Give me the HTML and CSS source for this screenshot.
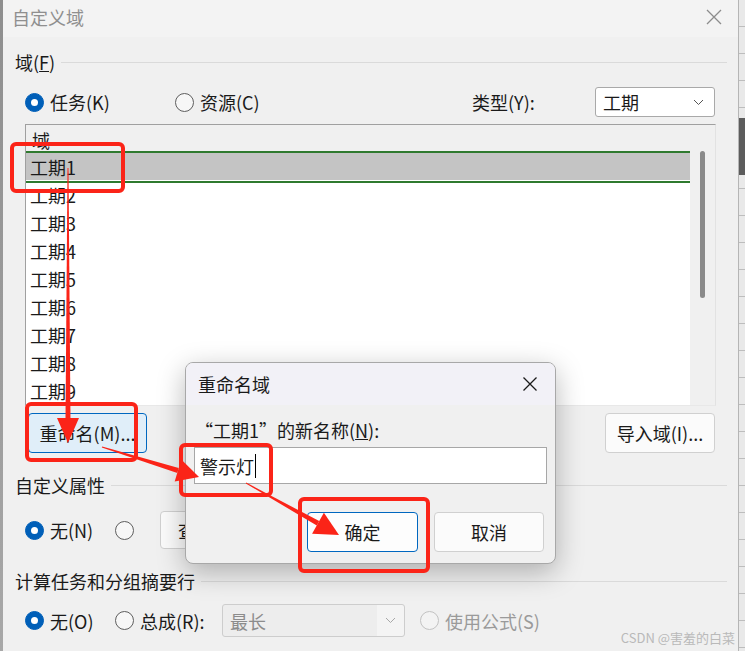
FILE: index.html
```html
<!DOCTYPE html>
<html lang="zh-CN">
<head>
  <meta charset="UTF-8">
  <title>自定义域</title>
  <link rel="stylesheet" href="styles.css">
</head>
<body>
  <div class="screen">
    <div class="edge-left"></div>

    <!-- Main dialog: 自定义域 -->
    <div class="window">
      <div class="titlebar">
        <span class="title">自定义域</span>
        <svg class="win-close" width="16" height="16" viewBox="0 0 16 16"><path d="M1 1L15 15M15 1L1 15" stroke="#8c8c8c" stroke-width="1.3" fill="none"/></svg>
      </div>

      <div class="content">
        <div class="group-head"><span>域(<u>F</u>)</span><i class="rule"></i></div>

        <div class="row type-row">
          <label class="radio-item wide"><span class="radio checked"></span>任务(K)</label>
          <label class="radio-item"><span class="radio"></span>资源(C)</label>
          <span class="type-label">类型(Y):</span>
          <div class="select type-select">
            <span>工期</span>
            <svg width="11" height="7" viewBox="0 0 11 7"><path d="M1 1L5.5 5.5L10 1" stroke="#555" stroke-width="1" fill="none"/></svg>
          </div>
        </div>

        <div class="listbox">
          <div class="list">
            <div class="list-head">域</div>
            <div class="list-row selected">工期1</div>
            <div class="list-row">工期2</div>
            <div class="list-row">工期3</div>
            <div class="list-row">工期4</div>
            <div class="list-row">工期5</div>
            <div class="list-row">工期6</div>
            <div class="list-row">工期7</div>
            <div class="list-row">工期8</div>
            <div class="list-row">工期9</div>
          </div>
          <div class="scrollbar"><div class="thumb"></div></div>
        </div>

        <div class="btn-row">
          <button class="btn focused rename-btn">重命名(M)...</button>
          <button class="btn import-btn">导入域(I)...</button>
        </div>

        <div class="group-head gap"><span>自定义属性</span><i class="rule"></i></div>

        <div class="row attr-row">
          <label class="radio-item"><span class="radio checked"></span>无(N)</label>
          <label class="radio-item short"><span class="radio"></span></label>
          <button class="btn lookup-btn">查阅(L)...</button>
        </div>

        <div class="group-head gap"><span>计算任务和分组摘要行</span><i class="rule"></i></div>

        <div class="row calc-row">
          <label class="radio-item"><span class="radio checked"></span>无(O)</label>
          <label class="radio-item rollup"><span class="radio"></span>总成(R):</label>
          <div class="select rollup-select">
            <span>最长</span>
            <svg width="11" height="7" viewBox="0 0 11 7"><path d="M1 1L5.5 5.5L10 1" stroke="#a8a8a8" stroke-width="1" fill="none"/></svg>
          </div>
          <label class="radio-item disabled"><span class="radio"></span>使用公式(S)</label>
        </div>
      </div>
    </div>

    <div class="edge-right"></div>

    <!-- Popup: 重命名域 -->
    <div class="dialog">
      <div class="dialog-title">
        <span>重命名域</span>
        <svg width="16" height="16" viewBox="0 0 16 16"><path d="M1.5 1.5L14.5 14.5M14.5 1.5L1.5 14.5" stroke="#1a1a1a" stroke-width="1.3" fill="none"/></svg>
      </div>
      <div class="dialog-body">
        <div class="field-label">“工期1”的新名称(<u>N</u>):</div>
        <div class="text-input"><span class="caret">警示灯</span></div>
        <div class="dialog-buttons">
          <button class="btn focused plain">确定</button>
          <button class="btn">取消</button>
        </div>
      </div>
    </div>

    <!-- red annotations -->
    <svg class="marks" width="745" height="651" viewBox="0 0 745 651">
      <g fill="none" stroke="#fb2418" stroke-width="4">
        <rect x="12" y="144" width="111" height="47" rx="4"/>
        <rect x="27" y="404" width="109" height="56" rx="4"/>
        <rect x="181" y="445" width="90" height="50" rx="4"/>
        <rect x="300" y="499" width="128" height="72" rx="4"/>
      </g>
      <g fill="#fb2418">
        <polygon points="67.5,168 68.5,168 70.5,420 65.5,420"/>
        <polygon points="57,418 79,418 68,443"/>
        <polygon points="101.8,447.5 102.2,446.5 178.7,468.1 177.3,472.9"/>
        <polygon points="174.7,481.5 181.3,459.5 199,477"/>
        <polygon points="245.8,483.4 246.2,482.6 319.2,521.1 316.8,525.5"/>
        <polygon points="312.1,533.8 323.9,512.8 339,535"/>
      </g>
    </svg>

    <div class="watermark">CSDN @害羞的白菜</div>
  </div>
</body>
</html>
```

FILE: styles.css
```css
/* Page */
body {
  margin: 0;
  font-family: "Noto Sans CJK SC", "Microsoft YaHei", sans-serif;
  font-size: 18px;
  color: #1a1a1a;
}

.screen {
  position: relative;
  width: 745px;
  height: 651px;
  display: flex;
  overflow: hidden;
  background: #f0f0f0;
}

.edge-left {
  width: 3px;
  background: linear-gradient(#8e8e8e, #a8a8a8);
}

.edge-right {
  width: 6px;
  border-left: 1px solid #b5b5b5;
  background:
    linear-gradient(#5c5c5c, #5c5c5c) 0 118px / 100% 57px no-repeat,
    repeating-linear-gradient(#e9e9e9 0 26px, #bdbdbd 26px 27px);
}

/* Main window */
.window {
  width: 735px;
  display: flex;
  flex-direction: column;
}

.titlebar {
  height: 37px;
  box-sizing: border-box;
  padding: 0 16px 4px 9px;
  display: flex;
  align-items: center;
  justify-content: space-between;
  background: #f3f3f3;
}
.title {
  color: #8f8f8f;
  line-height: 24px;
}

.content {
  flex: 1;
  padding: 13px 22px 0 12px;
  background: #f0f0f0;
}

.group-head {
  display: flex;
  align-items: center;
  height: 24px;
  line-height: 24px;
}
.group-head.gap {
  margin-top: 20px;
}
.rule {
  flex: 1;
  height: 1px;
  background: #dadada;
  margin: 0 -11px 0 6px;
}

.row {
  display: flex;
  align-items: center;
  margin-left: 10px;
}

/* Radios */
.radio-item {
  display: flex;
  align-items: center;
  width: 90px;
  line-height: 24px;
}
.radio-item.wide { width: 150px; }
.radio-item.short { width: 45px; }
.radio-item.rollup { width: 107px; }
.radio-item.disabled {
  width: auto;
  margin-left: 15px;
  color: #9a9a9a;
}

.radio {
  width: 19px;
  height: 19px;
  box-sizing: border-box;
  border-radius: 50%;
  border: 1px solid #5e5e5e;
  background: #f7f7f7;
  margin-right: 6px;
  flex: none;
  display: flex;
  align-items: center;
  justify-content: center;
}
.radio.checked {
  background: #005fb8;
  border-color: #005fb8;
}
.radio.checked::after {
  content: "";
  width: 7px;
  height: 7px;
  border-radius: 50%;
  background: #fff;
}
.disabled .radio {
  border-color: #c2c2c2;
  background: #f3f3f3;
}

/* Type row */
.type-row {
  margin-top: 13px;
  height: 30px;
}
.type-label {
  margin-left: auto;
  width: 123px;
}

.select {
  box-sizing: border-box;
  display: flex;
  align-items: center;
  justify-content: space-between;
  border-radius: 3px;
}
.type-select {
  width: 120px;
  height: 30px;
  padding: 0 10px 0 7px;
  margin-right: 1px;
  background: #fff;
  border: 1px solid #a9a9a9;
}

/* List box */
.listbox {
  margin: 7px 0 0 10px;
  height: 282px;
  box-sizing: border-box;
  display: flex;
  border: 1px solid;
  border-color: #a0a0a0 #e2e2e2 #e8e8e8 #a0a0a0;
  background: #fff;
}
.list {
  flex: 1;
  overflow: hidden;
}
.list-head {
  height: 28px;
  line-height: 30px;
  padding-left: 6px;
  background: #f0f0f0;
}
.list-row {
  height: 28px;
  line-height: 28px;
  padding-left: 4px;
}
.list-row.selected {
  position: relative;
  z-index: 1;
  background: #c4c4c4;
  box-shadow: inset 0 -1px 0 #fff, 0 -2px 0 #2f7a2f, 0 2px 0 #2f7a2f;
}
.scrollbar {
  width: 25px;
  background: #f0f0f0;
  padding: 26px 0 0 10px;
  box-sizing: border-box;
}
.thumb {
  width: 5px;
  height: 147px;
  border-radius: 3px;
  background: #8a8a8a;
}

/* Buttons */
.btn {
  font-family: inherit;
  font-size: 18px;
  color: #1a1a1a;
  height: 40px;
  box-sizing: border-box;
  padding: 0;
  border: 1px solid #d0d0d0;
  border-radius: 4px;
  background: #fbfbfb;
  width: 110px;
}
.btn.focused {
  border-color: #0067c0;
  background: #e0eef9;
}
.btn.focused.plain {
  background: #fdfdfd;
  width: 111px;
}

.btn-row {
  display: flex;
  justify-content: space-between;
  margin: 7px 1px 0 13px;
}
.rename-btn { width: 119px; }

.attr-row {
  margin-top: 14px;
  height: 38px;
}
.lookup-btn {
  height: 38px;
  padding-left: 17px;
  text-align: left;
}

.calc-row {
  margin-top: 11px;
  height: 33px;
}
.rollup-select {
  width: 183px;
  height: 33px;
  padding: 0 8px 0 7px;
  color: #8c8c8c;
  border: 1px solid #cdcdcd;
  background: linear-gradient(90deg, #ededed 0 85%, #f4f4f4 85%);
}

/* Rename popup */
.dialog {
  position: absolute;
  left: 185px;
  top: 362px;
  width: 371px;
  height: 202px;
  box-sizing: border-box;
  border: 1px solid #a8a8a8;
  border-radius: 8px;
  background: #f0f0f0;
  box-shadow: 0 8px 28px rgba(0, 0, 0, 0.28);
  overflow: hidden;
  z-index: 2;
}
.dialog-title {
  height: 42px;
  padding: 0 17px 0 12px;
  display: flex;
  align-items: center;
  justify-content: space-between;
  background: #f2f1f7;
}
.dialog-body {
  padding: 13px 8px 0 8px;
}
.field-label {
  line-height: 24px;
  padding-left: 1px;
}
.text-input {
  margin-top: 5px;
  height: 37px;
  box-sizing: border-box;
  border: 1px solid #a7a7a7;
  background: #fff;
  padding-left: 5px;
  display: flex;
  align-items: center;
}
.caret {
  line-height: 24px;
  border-right: 1px solid #000;
  padding-right: 1px;
}
.dialog-buttons {
  display: flex;
  justify-content: flex-end;
  gap: 16px;
  margin: 28px 3px 0 0;
}

/* Annotations */
.marks {
  position: absolute;
  left: 0;
  top: 0;
  z-index: 3;
  pointer-events: none;
}

.watermark {
  position: absolute;
  right: 10px;
  top: 628px;
  font-size: 13px;
  line-height: 20px;
  color: #b9b9b9;
  z-index: 3;
}
```
